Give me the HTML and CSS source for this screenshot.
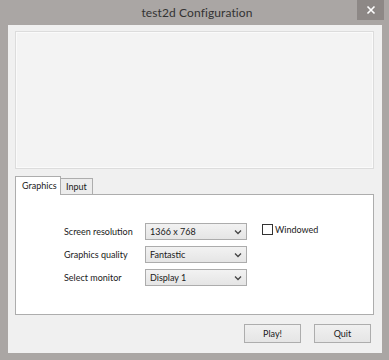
FILE: index.html
```html
<!DOCTYPE html>
<html>
<head>
<meta charset="utf-8">
<link rel="stylesheet" href="styles.css">
</head>
<body>
<div class="window">
  <div class="titlebar">
    <span class="title">test2d Configuration</span>
    <div class="close">
      <svg width="10" height="10" viewBox="0 0 10 10"><path d="M1.5 1.5 L8.5 8.5 M8.5 1.5 L1.5 8.5" stroke="#fff" stroke-width="1.6"/></svg>
    </div>
  </div>
  <div class="client">
    <div class="banner"></div>
    <div class="tabs">
      <div class="tab active">Graphics</div>
      <div class="tab">Input</div>
    </div>
    <div class="panel">
      <div class="form">
        <div class="row">
          <span class="label">Screen resolution</span>
          <div class="combo"><span>1366 x 768</span><svg width="8" height="6" viewBox="0 0 8 6"><path d="M1 1.5 L4 4.5 L7 1.5" stroke="#444" stroke-width="1.3" fill="none"/></svg></div>
          <label class="check"><span class="box"></span>Windowed</label>
        </div>
        <div class="row">
          <span class="label">Graphics quality</span>
          <div class="combo"><span>Fantastic</span><svg width="8" height="6" viewBox="0 0 8 6"><path d="M1 1.5 L4 4.5 L7 1.5" stroke="#444" stroke-width="1.3" fill="none"/></svg></div>
        </div>
        <div class="row">
          <span class="label">Select monitor</span>
          <div class="combo"><span>Display 1</span><svg width="8" height="6" viewBox="0 0 8 6"><path d="M1 1.5 L4 4.5 L7 1.5" stroke="#444" stroke-width="1.3" fill="none"/></svg></div>
        </div>
      </div>
    </div>
    <div class="buttons">
      <div class="btn">Play!</div>
      <div class="btn">Quit</div>
    </div>
  </div>
</div>
</body>
</html>
```
FILE: styles.css
```css
html, body {
  margin: 0;
  padding: 0;
  background: #ffffff;
}
body {
  width: 389px;
  height: 360px;
  font-family: "Lato", "Noto Sans", sans-serif;
  font-size: 9px;
  color: #1a1a1a;
  white-space: nowrap;
}
.window {
  box-sizing: border-box;
  width: 389px;
  height: 360px;
  background: #aaa6a4;
  padding: 0 7px 7px 8px;
  display: flex;
  flex-direction: column;
}
.titlebar {
  height: 25px;
  display: flex;
  align-items: center;
  justify-content: center;
  position: relative;
  flex-shrink: 0;
}
.title {
  font-size: 12px;
  color: #333;
  margin-top: -1px;
  margin-left: 4px;
  letter-spacing: 0.1px;
}
.close {
  position: absolute;
  right: -2px;
  top: 0;
  width: 27px;
  height: 20px;
  background: #8d8886;
  display: flex;
  align-items: center;
  justify-content: center;
}
.client {
  flex: 1;
  background: #f0f0f0;
  padding: 6px 8px 0 7px;
  display: flex;
  flex-direction: column;
}
.banner {
  height: 136px;
  border: 1px solid #dcdcdc;
  background: #f3f3f3;
  box-shadow: inset 0 0 0 1px #fafafa;
}
.tabs {
  display: flex;
  align-items: flex-end;
  margin-top: 7px;
  height: 18px;
}
.tab {
  box-sizing: border-box;
  height: 16px;
  padding: 1px 5px 0 5px;
  border: 1px solid #adadad;
  border-bottom: none;
  background: #ececec;
  line-height: 14px;
  margin-left: -1px;
}
.tab.active {
  width: 46px;
  background: #ffffff;
  margin-left: 0;
  padding: 2px 0 0 6px;
  line-height: 14px;
  position: relative;
  z-index: 1;
  margin-bottom: -1px;
  height: 19px;
}
.panel {
  height: 121px;
  border: 1px solid #adadad;
  background: #ffffff;
  box-sizing: border-box;
}
.form {
  padding: 28px 0 0 48px;
  display: flex;
  flex-direction: column;
  gap: 6px;
}
.row {
  display: flex;
  align-items: center;
  height: 17px;
}
.label {
  width: 81px;
}
.combo {
  box-sizing: border-box;
  width: 102px;
  height: 17px;
  border: 1px solid #acacac;
  background: linear-gradient(#f2f2f2, #e5e5e5);
  display: flex;
  align-items: center;
  justify-content: space-between;
  padding: 0 4px 0 4px;
}
.check {
  display: flex;
  align-items: center;
  margin-left: 15px;
  margin-top: -4px;
}
.box {
  box-sizing: border-box;
  width: 11px;
  height: 11px;
  border: 1px solid #333;
  background: #fff;
  margin-right: 2px;
}
.buttons {
  display: flex;
  justify-content: flex-end;
  gap: 13px;
  padding: 9px 3px 0 0;
}
.btn {
  box-sizing: border-box;
  width: 57px;
  height: 19px;
  border: 1px solid #adadad;
  background: linear-gradient(#f0f0f0, #e5e5e5);
  display: flex;
  align-items: center;
  justify-content: center;
}
```
